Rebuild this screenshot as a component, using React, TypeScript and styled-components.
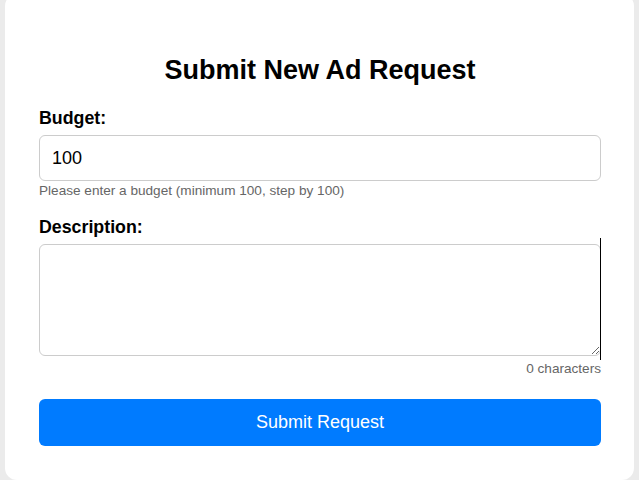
import React, { useState } from 'react';
import styled, { createGlobalStyle } from 'styled-components';

const GlobalStyle = createGlobalStyle`
    html, body {
        margin: 0;
        padding: 0;
        background-color: #ebebeb;
        font-family: "Liberation Sans", Arial, sans-serif;
        overflow: hidden;
    }
    * {
        box-sizing: border-box;
    }
`;

const Card = styled.form`
    margin: -6px 5px 0 5px;
    padding: 61px 33px 34px 34px;
    background-color: #ffffff;
    border-radius: 12px;
    display: flex;
    flex-direction: column;
`;

const Title = styled.h2`
    margin: 0 0 23px;
    font-size: 27px;
    line-height: 30px;
    font-weight: 700;
    text-align: center;
    color: #000;
`;

const Field = styled.div<{ $gap: number }>`
    display: flex;
    flex-direction: column;
    margin-bottom: ${(props) => props.$gap}px;
`;

const Label = styled.label`
    font-size: 17.8px;
    line-height: 20px;
    font-weight: 700;
    color: #000;
    margin-bottom: 7px;
`;

const Input = styled.input`
    height: 46px;
    padding: 0 12px;
    font-family: inherit;
    font-size: 18px;
    color: #000;
    border: 1px solid #cccccc;
    border-radius: 6px;
    outline: none;
`;

const TextAreaWrap = styled.div`
    position: relative;
    display: flex;
`;

// the dark line that sits on the textarea's right edge in the screenshot
const EdgeLine = styled.span`
    position: absolute;
    right: 0;
    top: -6px;
    width: 1px;
    height: 122px;
    background: #000;
`;

const TextArea = styled.textarea`
    width: 100%;
    height: 112px;
    padding: 10px 12px;
    font-family: inherit;
    font-size: 18px;
    border: 1px solid #cccccc;
    border-radius: 6px;
    outline: none;
    resize: vertical;
`;

const Hint = styled.small<{ $align?: string }>`
    font-size: 13.6px;
    line-height: 16px;
    color: #666666;
    text-align: ${(props) => props.$align || 'left'};
`;

const HelpHint = styled(Hint)`
    margin-top: 2px;
`;

const CountHint = styled(Hint)`
    margin-top: 5px;
`;

const SubmitButton = styled.button`
    height: 47px;
    border: none;
    border-radius: 6px;
    background-color: #007bff;
    color: #ffffff;
    font-family: inherit;
    font-size: 18px;
    cursor: pointer;
`;

const App: React.FC = () => {
    const [budget, setBudget] = useState<string>('100');
    const [description, setDescription] = useState<string>('');

    return (
        <>
            <GlobalStyle />
            <Card onSubmit={(e) => e.preventDefault()}>
                <Title>Submit New Ad Request</Title>
                <Field $gap={18}>
                    <Label htmlFor="budget">Budget:</Label>
                    <Input
                        id="budget"
                        type="text"
                        value={budget}
                        onChange={(e) => setBudget(e.target.value)}
                    />
                    <HelpHint>Please enter a budget (minimum 100, step by 100)</HelpHint>
                </Field>
                <Field $gap={22}>
                    <Label htmlFor="description">Description:</Label>
                    <TextAreaWrap>
                        <TextArea
                            id="description"
                            value={description}
                            onChange={(e) => setDescription(e.target.value)}
                        />
                        <EdgeLine />
                    </TextAreaWrap>
                    <CountHint $align="right">{description.length} characters</CountHint>
                </Field>
                <SubmitButton type="submit">Submit Request</SubmitButton>
            </Card>
        </>
    );
};

export default App;
